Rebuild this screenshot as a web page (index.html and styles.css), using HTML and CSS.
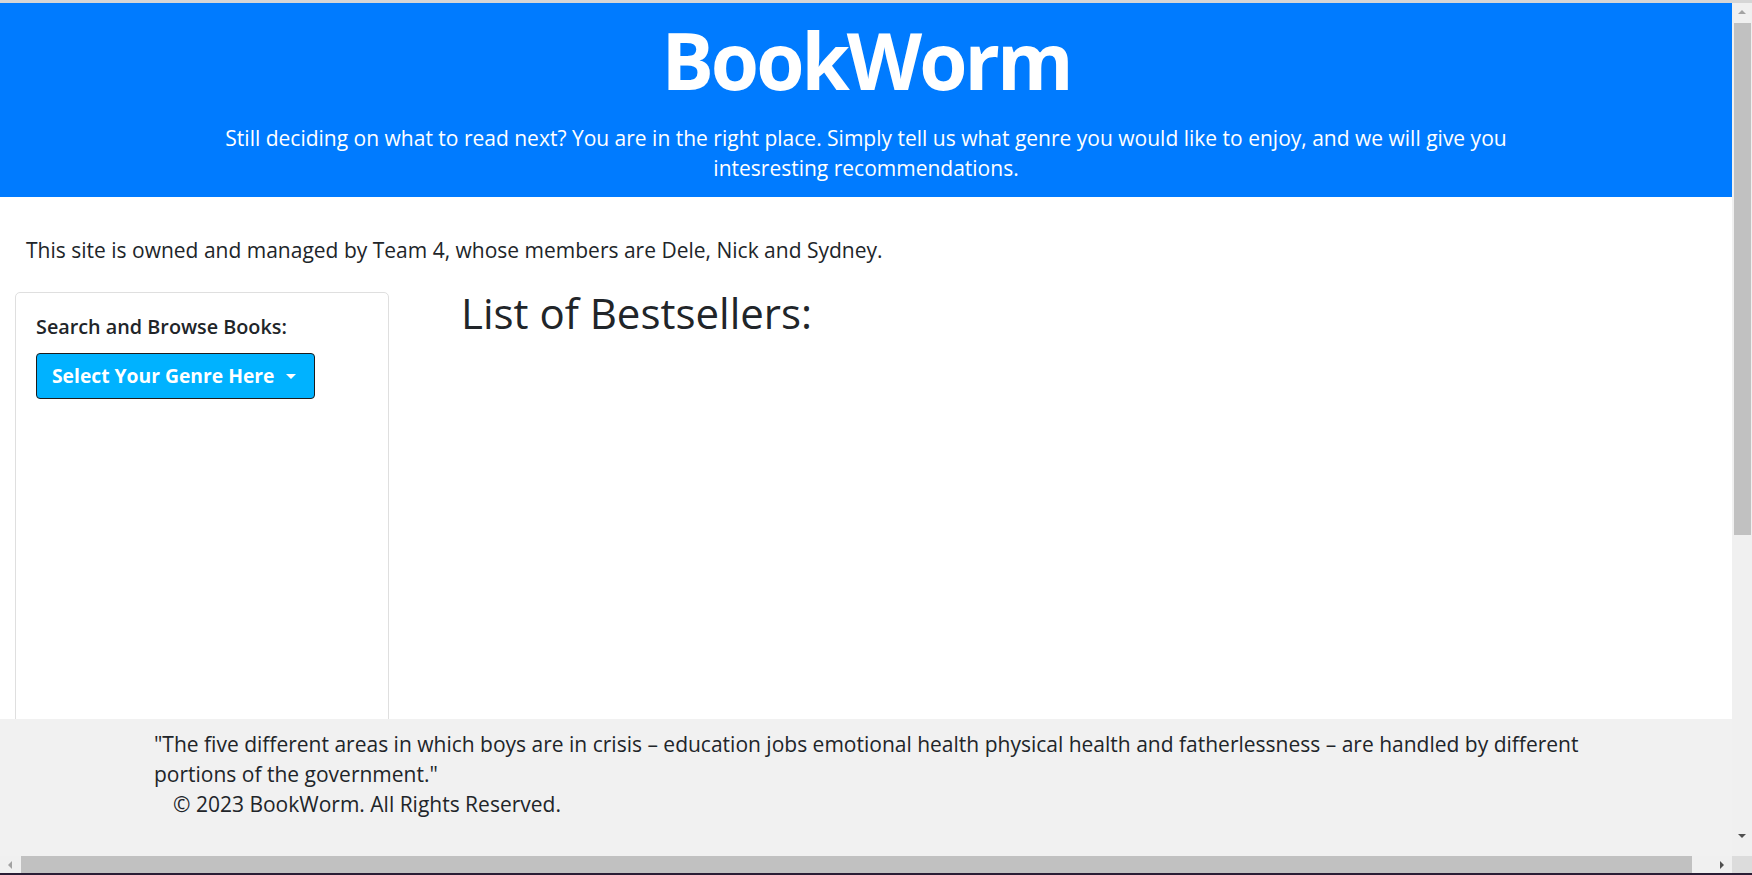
FILE: index.html
```html
<!DOCTYPE html>
<html lang="en">
<head>
<meta charset="utf-8">
<title>BookWorm</title>
<link rel="stylesheet" href="styles.css">
</head>
<body>
<div class="topline"></div>
<div class="window">
  <div class="viewport">
    <header class="hero">
      <h1 class="hero-title">BookWorm</h1>
      <p class="hero-lead">Still deciding on what to read next? You are in the right place. Simply tell us what genre you would like to enjoy, and we will give you intesresting recommendations.</p>
    </header>
    <p class="intro">This site is owned and managed by Team 4, whose members are Dele, Nick and Sydney.</p>
    <div class="main-row">
      <aside class="side-card">
        <h5 class="side-title">Search and Browse Books:</h5>
        <button class="genre-btn" type="button">Select Your Genre Here<span class="caret"></span></button>
      </aside>
      <section class="content">
        <h2 class="content-title">List of Bestsellers:</h2>
      </section>
    </div>
    <footer class="footer">
      <p class="quote">"The five different areas in which boys are in crisis – education jobs emotional health physical health and fatherlessness – are handled by different portions of the government."</p>
      <p class="copy">© 2023 BookWorm. All Rights Reserved.</p>
    </footer>
  </div>
  <div class="vscroll">
    <div class="vs-btn"><span class="tri-up"></span></div>
    <div class="vs-track"><div class="vs-thumb"></div></div>
    <div class="vs-btn vs-btn-down"><span class="tri-down"></span></div>
  </div>
</div>
<div class="hscroll">
  <div class="hs-btn"><span class="tri-left"></span></div>
  <div class="hs-track"><div class="hs-thumb"></div></div>
  <div class="hs-btn"><span class="tri-right"></span></div>
  <div class="hs-corner"></div>
</div>
<div class="bottomline"></div>
</body>
</html>
```
FILE: styles.css
```css
* { box-sizing: border-box; }
html, body { margin: 0; padding: 0; }
body {
  width: 1752px;
  height: 875px;
  overflow: hidden;
  display: flex;
  flex-direction: column;
  font-family: "Open Sans", "Noto Sans", sans-serif;
  font-size: 21px;
  line-height: 30px;
  color: #212529;
  background: #fff;
}
.topline { height: 3px; background: #d6d6d6; flex: none; }
.window { display: flex; height: 853px; flex: none; }
.viewport {
  width: 1732px;
  display: flex;
  flex-direction: column;
  overflow: hidden;
}
.hero {
  background: #007bff;
  color: #fff;
  text-align: center;
  padding: 10px 0 14px;
  flex: none;
}
.hero-title {
  margin: 0;
  font-size: 78px;
  line-height: 94px;
  font-weight: 700;
  letter-spacing: -3px;
}
.hero-lead {
  margin: 16px auto 0;
  max-width: 1384px;
  font-size: 21px;
  line-height: 30px;
}
.intro {
  margin: 38px 0 0;
  padding-left: 26px;
  flex: none;
}
.main-row {
  display: flex;
  flex: 1;
  min-height: 0;
  overflow: hidden;
  margin-top: 19px;
  padding-left: 15px;
  gap: 72px;
  align-items: stretch;
}
.side-card {
  width: 374px;
  flex: none;
  margin-top: 8px;
  border: 1px solid #dfdfdf;
  border-radius: 5px;
  padding: 22px 20px;
  margin-bottom: -20px;
}
.side-title {
  margin: 0 0 14px;
  font-size: 19.8px;
  line-height: 24px;
  font-weight: 600;
}
.genre-btn {
  display: flex;
  align-items: center;
  height: 46px;
  width: 279px;
  padding: 0 0 0 15px;
  background: #00b2ff;
  border: 1px solid #1c1c1c;
  border-radius: 4px;
  color: #fff;
  font-family: "Open Sans", "Noto Sans", sans-serif;
  font-size: 19.3px;
  font-weight: 700;
  line-height: 30px;
}
.caret {
  margin-left: 12px;
  width: 0;
  height: 0;
  border-top: 5px solid #fff;
  border-left: 5px solid transparent;
  border-right: 5px solid transparent;
}
.content { flex: 1; }
.content-title {
  margin: 0;
  font-size: 42px;
  line-height: 58px;
  font-weight: 400;
}
.footer {
  height: 137px;
  flex: none;
  background: #f1f1f1;
  padding: 10px 0 0 154px;
}
.quote { margin: 0; width: 1432px; }
.copy { margin: 0; padding-left: 19px; }

/* fake scrollbars */
.vscroll {
  width: 20px;
  flex: none;
  background: #f0f0f0;
  display: flex;
  flex-direction: column;
}
.vs-btn {
  height: 17px;
  display: flex;
  align-items: center;
  justify-content: center;
  flex: none;
}
.vs-track { flex: 1; padding: 3px 1px 0 2px; }
.vs-thumb { height: 512px; background: #c1c1c1; }
.vs-btn-down { height: 24px; align-items: flex-start; padding-top: 2px; }
.tri-up { width: 0; height: 0; border-bottom: 4px solid #a3a3a3; border-left: 4px solid transparent; border-right: 4px solid transparent; }
.tri-down { width: 0; height: 0; border-top: 4px solid #505050; border-left: 4px solid transparent; border-right: 4px solid transparent; }
.hscroll {
  height: 17px;
  flex: none;
  display: flex;
  background: #f0f0f0;
}
.hs-btn { width: 20px; display: flex; align-items: center; justify-content: center; flex: none; }
.hs-track { flex: 1; padding: 0 20px 0 1px; }
.hs-thumb { height: 17px; background: #c1c1c1; }
.hs-corner { width: 20px; background: #dcdcdc; flex: none; }
.tri-left { width: 0; height: 0; border-right: 4px solid #a3a3a3; border-top: 4px solid transparent; border-bottom: 4px solid transparent; }
.tri-right { width: 0; height: 0; border-left: 4px solid #505050; border-top: 4px solid transparent; border-bottom: 4px solid transparent; }
.bottomline { height: 2px; background: #2a1d35; flex: none; }
```
